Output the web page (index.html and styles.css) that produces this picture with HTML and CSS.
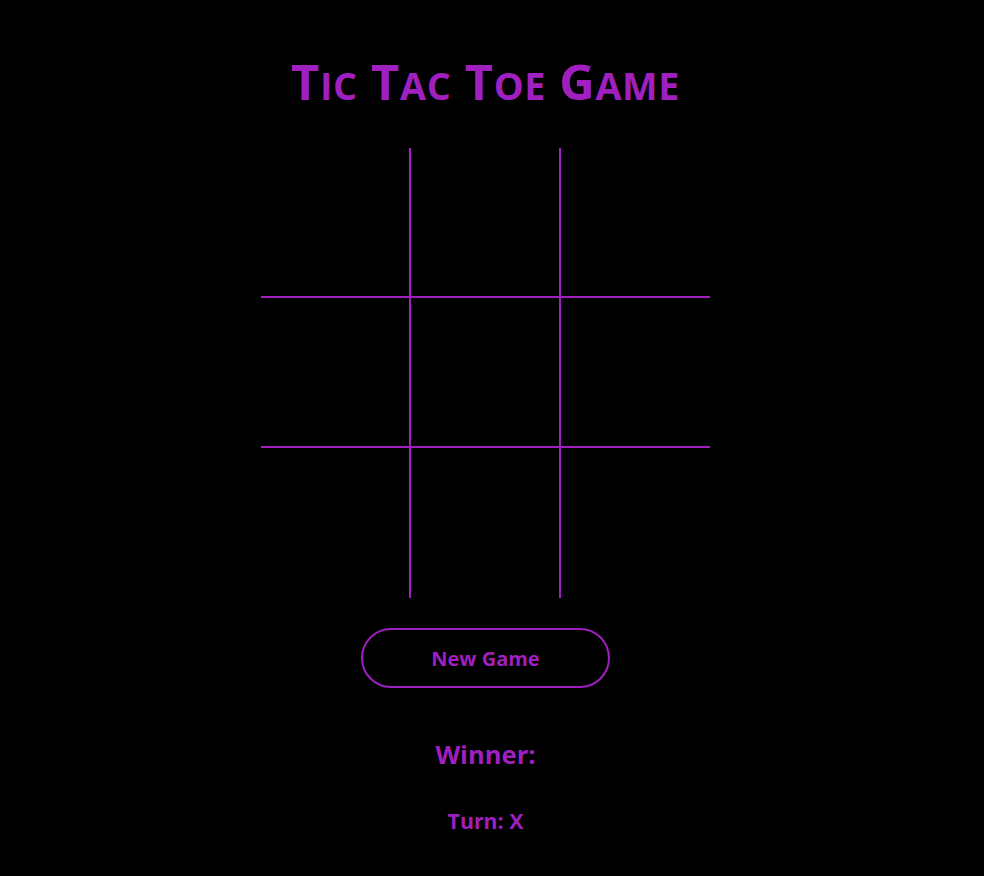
FILE: index.html
```html
<!DOCTYPE html>
<html>
<head>
<meta charset="utf-8">
<link rel="stylesheet" href="styles.css">
</head>
<body>
<main class="game">
  <h1 class="title">T<span class="sc">ic</span> T<span class="sc">ac</span> T<span class="sc">oe</span> G<span class="sc">ame</span></h1>
  <div class="board">
    <div class="cell"></div><div class="cell"></div><div class="cell"></div>
    <div class="cell"></div><div class="cell"></div><div class="cell"></div>
    <div class="cell"></div><div class="cell"></div><div class="cell"></div>
  </div>
  <button class="new-game">New Game</button>
  <h2 class="winner">Winner:</h2>
  <h3 class="turn">Turn: X</h3>
</main>
</body>
</html>
```
FILE: styles.css
```css
html, body {
  margin: 0;
  padding: 0;
  background: #000;
}
body {
  font-family: "Open Sans", sans-serif;
  color: #9f1fbf;
}
.game {
  display: flex;
  flex-direction: column;
  align-items: center;
  padding: 51px 13px 0 0;
}
.title {
  margin: 0;
  font-size: 49px;
  line-height: 60px;
  font-weight: 700;
  letter-spacing: 0.6px;
}
.sc {
  font-size: 0.77em;
  line-height: 1;
  text-transform: uppercase;
}
.board {
  margin-top: 37px;
  display: grid;
  grid-template-columns: 149px 150px 150px;
  grid-template-rows: 149px 150px 151px;
}
.cell {
  box-sizing: border-box;
  border: 0 solid #9f1fbf;
}
.cell:nth-child(-n+6) {
  border-bottom-width: 1px;
}
.cell:nth-child(n+4) {
  border-top-width: 1px;
}
.cell:nth-child(3n+1), .cell:nth-child(3n+2) {
  border-right-width: 1px;
}
.cell:nth-child(3n+2), .cell:nth-child(3n) {
  border-left-width: 1px;
}
.new-game {
  margin-top: 30px;
  width: 249px;
  height: 60px;
  border: 2px solid #9f1fbf;
  border-radius: 30px;
  background: #000;
  color: #9f1fbf;
  font-family: "Open Sans", sans-serif;
  font-weight: 700;
  font-size: 20px;
  cursor: pointer;
}
.winner {
  margin: 50px 0 0;
  font-size: 25.6px;
  line-height: 34px;
  font-weight: 700;
}
.turn {
  margin: 34px 0 0;
  font-size: 21.3px;
  line-height: 30px;
  font-weight: 700;
}
```
